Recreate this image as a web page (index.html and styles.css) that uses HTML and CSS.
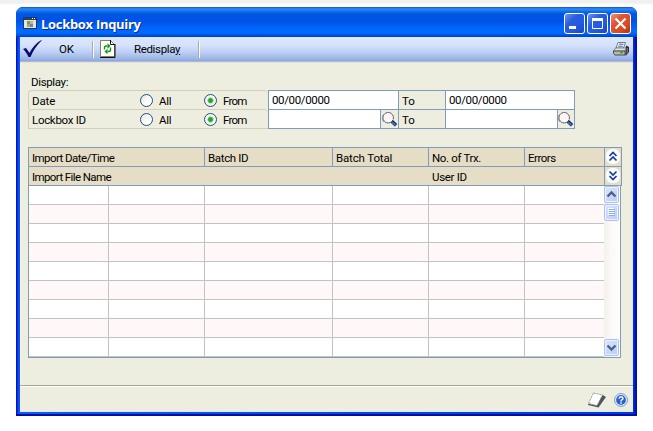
FILE: index.html
```html
<!DOCTYPE html>
<html lang="en">
<head>
<meta charset="utf-8">
<title>Lockbox Inquiry</title>
<link rel="stylesheet" href="styles.css">
</head>
<body>
<svg width="0" height="0" class="defs">
  <symbol id="lens" viewBox="0 0 17 18">
    <circle cx="7.2" cy="7.7" r="5.2" fill="#fff7fb" stroke="#1c1c28" stroke-dasharray="1.4 .7"/>
    <path d="M3 12a5.5 5.5 0 0 1 0-8" fill="none" stroke="#a58ca0"/>
    <path d="M11 11.5l4 3.700" stroke="#10205c" stroke-width="3.6"/>
    <path d="M11.3 12.300l3 2.700" stroke="#3c82e4" stroke-width="1.6"/>
  </symbol>
</svg>
<div class="window">
  <header class="titlebar">
    <svg class="app-icon" width="14" height="12" viewBox="0 0 14 12">
      <path fill="#1c376f" d="M0 0h14v12H0z"/><path fill="#e8e4dc" d="M1 3h12v8H1z"/>
      <path fill="#334458" d="M1 1h12v1.4H1z"/><path fill="#fff" d="M9 1h1v1H9zM11 1h1v1h-1z"/>
      <path fill="#4ba3a5" d="M4 4h3v3H4z"/><path fill="#e5b540" d="M7 4h3v3H7z"/>
      <path fill="#cda03e" d="M4 7h3v3H4z"/><path fill="#4a91d5" d="M7 7h3v3H7z"/>
    </svg>
    <h1>Lockbox Inquiry</h1>
    <div class="controls">
      <span class="control"><svg width="19" height="19"><path fill="#fff" d="M4 12h7v3H4z"/></svg></span>
      <span class="control"><svg width="19" height="19"><path fill="none" stroke="#fff" d="M4.5 5v9.500h10V5"/><path fill="#fff" d="M4 4h11v3H4z"/></svg></span>
      <span class="control close"><svg width="19" height="19"><path fill="none" stroke="#fff" stroke-width="2.2" d="M4.500 4.500l10 10M14.500 4.500l-10 10"/></svg></span>
    </div>
  </header>
  <nav class="toolbar">
    <svg class="check" width="19" height="18" viewBox="0 0 19 18"><path fill="#080877" d="M0 9l3-1 3.500 5C9 8 13 3 18.500 0l.2.600C13.500 5.500 10 11 7.500 17H5.500C4 14 2.500 11 0 9z"/></svg>
    <span class="ok">OK</span>
    <i class="divider"></i>
    <svg class="refresh" width="16" height="18" viewBox="0 0 16 18">
      <path fill="#fffff4" stroke="#7b8170" d="M.5.5h10l4 4v12H.5z"/><path fill="none" stroke="#111" d="M10.500 0v4.500H15M15 4v13.500H0"/>
      <path fill="none" stroke="#15922a" stroke-width="1.4" d="M4.500 9.500V7.500q0-1.500 2-1.500h1M10.500 7.500V10q0 1.500-2 1.500H7.500"/>
      <path fill="#15922a" d="M7.500 3.300l3 2.700-3 2.700zM7.500 8.800l-3 2.700 3 2.700z"/>
    </svg>
    <span class="redisplay">Redispla<u>y</u></span>
    <i class="divider last"></i>
    <svg class="printer" width="16" height="14" viewBox="0 0 16 14">
      <path fill="#f8fbff" stroke="#55606e" stroke-width=".8" d="M5 .5h7.500L10.500 6H3z"/>
      <path stroke="#4b60ae" d="M6 2.200h4.500M5.200 4.200h4.500"/>
      <path fill="#2c2f30" d="M13 3.500l3 1.500v5l-3.500 4V7z"/>
      <path fill="#e4e6e0" stroke="#6e726f" stroke-width=".8" d="M2.500 6h10.500l-1 3H.8z"/>
      <path fill="#b5b8b0" stroke="#3c4040" stroke-width=".9" d="M.5 9H12v4H2L.5 11.500z"/>
      <path fill="#20a833" d="M7 9.700h3v1.600H7z"/><path stroke="#99a" stroke-width=".8" d="M14.200 6v5"/>
    </svg>
  </nav>
  <main>
    <div class="caption">Display:</div>
    <section class="filters">
      <div class="filter">
        <div class="options"><span class="name date">Date</span><i class="radio"></i><span class="all">All</span><i class="radio on"></i><span class="from">From</span></div>
        <div class="field"><span class="zeros">00/00/0000</span></div>
        <div class="to">To</div>
        <div class="field end"><span class="zeros">00/00/0000</span></div>
      </div>
      <div class="filter">
        <div class="options"><span class="name">Lockbox ID</span><i class="radio"></i><span class="all">All</span><i class="radio on"></i><span class="from">From</span></div>
        <div class="field"><span class="lookup"><svg width="17" height="18"><use href="#lens"/></svg></span></div>
        <div class="to">To</div>
        <div class="field end"><span class="lookup"><svg width="17" height="18"><use href="#lens"/></svg></span></div>
      </div>
    </section>
    <section class="list">
      <div class="head">
        <div class="hrow">
          <span class="h1 t1">Import Date/Time</span><span class="h2 t2">Batch ID</span><span class="h3 t3">Batch Total</span><span class="h4 t4">No. of Trx.</span><span class="h5 t5">Errors</span>
          <span class="toggle"><svg width="14" height="15"><path d="M3.500 7L7 3.500 10.500 7M3.500 11.500L7 8l3.500 3.500"/></svg></span>
        </div>
        <div class="hrow">
          <span class="wide t6">Import File Name</span><span class="user t7">User ID</span>
          <span class="toggle"><svg width="14" height="15"><path d="M3.500 3.500L7 7l3.500-3.500M3.500 8L7 11.500 10.500 8"/></svg></span>
        </div>
      </div>
      <div class="body">
        <div class="rows">
          <div class="row"><i></i><i></i><i></i><i></i><i></i><i></i></div>
          <div class="row"><i></i><i></i><i></i><i></i><i></i><i></i></div>
          <div class="row"><i></i><i></i><i></i><i></i><i></i><i></i></div>
          <div class="row"><i></i><i></i><i></i><i></i><i></i><i></i></div>
          <div class="row"><i></i><i></i><i></i><i></i><i></i><i></i></div>
          <div class="row"><i></i><i></i><i></i><i></i><i></i><i></i></div>
          <div class="row"><i></i><i></i><i></i><i></i><i></i><i></i></div>
          <div class="row"><i></i><i></i><i></i><i></i><i></i><i></i></div>
          <div class="row"><i></i><i></i><i></i><i></i><i></i><i></i></div>
        </div>
        <div class="scroll">
          <span class="sbtn"><svg width="13" height="15"><path class="arrow" d="M2.500 9.500l4-4 4 4"/></svg></span>
          <span class="sbtn thumb"><svg width="13" height="15"><path stroke="#fff" d="M3 3.500h6M3 5.500h6M3 7.500h6M3 9.500h6"/><path stroke="#8cadec" d="M4 4.500h6M4 6.500h6M4 8.500h6M4 10.500h6"/></svg></span>
          <span class="sbtn down"><svg width="13" height="15"><path class="arrow" d="M2.500 5.500l4 4 4-4"/></svg></span>
        </div>
      </div>
    </section>
  </main>
  <footer>
    <svg width="20" height="16" viewBox="0 0 20 16">
      <path fill="#4d565c" d="M15 2.500l4 2.500-7.500 10.500L1 13l.5-1.500 8 2z"/><path fill="#fff" stroke="#888c8e" stroke-width=".9" stroke-dasharray="2 1" d="M6.500 1l9 2-5.500 10.500-8.500-2z"/>
    </svg>
    <svg class="help" width="14" height="14" viewBox="0 0 14 14">
      <circle cx="7" cy="7" r="6.400" fill="#f4f9fd" stroke="#5b86ce" stroke-width=".9"/><circle cx="7" cy="7" r="4.900" fill="#2a62cd"/>
      <path fill="none" stroke="#fff" stroke-width="1.400" d="M5 5.700q.2-1.900 2.200-1.900Q9 3.900 9 5.400q0 1-1.200 1.500Q7 7.300 7 8.500M7 9.300v1.400"/>
    </svg>
  </footer>
</div>
</body>
</html>
```
FILE: styles.css
```css
* { box-sizing: border-box; }
body {
  margin: 0;
  height: 431px;
  overflow: hidden;
  padding: 7px 16px 15px;
  background: linear-gradient(#f0f0f0 0, #f0f0f0 3px, #fbfbfb 4px, #fff 6px);
  font: 11.5px/18px Roboto, "Liberation Sans", sans-serif;
  color: #000;
}
.defs { position: absolute; }
svg { display: block; flex: none; }
i { display: block; flex: none; }
.window {
  width: 621px;
  height: 409px;
  display: flex;
  flex-direction: column;
  padding: 0 4px 4px;
  border-radius: 7px 7px 0 0;
  overflow: hidden;
  background: linear-gradient(90deg, #0010b0 0, #0022d8 1px, #0645ec 2px, #125af0 4px, #0039df 617px, #0018c0 619px, #00089a 621px);
  box-shadow: inset 0 -2px #0010a5;
}
.titlebar {
  height: 30px;
  flex: none;
  margin: 0 -4px;
  padding: 0 6px 0 7px;
  display: flex;
  align-items: center;
  background: linear-gradient(#0650d4 0, #2d8df9 2px, #1672ee 4px, #0057e3 7px, #0052e5 14px, #0066fc 21px, #006bff 26px, #0049d2 29px, #003ec0 30px);
}
.app-icon { margin-top: 2px; }
h1 {
  margin: 3px 0 0 4px;
  font: bold 13px/18px "Open Sans", "Noto Sans", sans-serif;
  letter-spacing: -0.3px;
  white-space: nowrap;
  color: #fff;
  text-shadow: 1px 1px #0b2a8c;
}
.controls { display: flex; gap: 2px; margin: 3px 0 0 auto; }
.control {
  width: 21px;
  height: 21px;
  border: 1px solid #fff;
  border-radius: 3px;
  background: linear-gradient(135deg, #6d93ee, #2a5ee0 35%, #2459e2 65%, #1d47ba);
}
.close { background: linear-gradient(135deg, #ed9580, #e0542f 35%, #dc4821 70%, #b62f10); }
.toolbar {
  height: 26px;
  flex: none;
  display: flex;
  align-items: flex-start;
  padding: 3px 4px 0 3px;
  background: linear-gradient(#dce8fc 0, #d6e2fb 8px, #bdd0f4 15px, #9bb5e7 22px, #87a5dc 24px, #d8cec8 25px, #f6f4ec 26px);
}
.toolbar span { white-space: nowrap; }
.ok { margin-left: 17px; width: 33px; letter-spacing: -.2px; }
.divider { width: 1px; height: 17px; margin-top: 1px; background: #b2a99d; box-shadow: 1px 0 #f5f8fc; }
.refresh { margin-left: 7px; }
.redisplay { margin-left: 18px; width: 64px; letter-spacing: -.35px; }
.printer { margin: 2px 0 0 auto; }
main {
  flex: 1;
  padding: 10px 11px 0 8px;
  background: #edeedf;
  border-left: 1px solid #f5f6ec;
  border-right: 1px solid #dfe9f8;
}
.caption { margin-left: 2px; height: 17px; letter-spacing: -.35px; }
.filters { width: 547px; margin-left: -1px; border-bottom: 1px solid #7f9db9; border-image: linear-gradient(90deg, #d0d0bd 240px, #7f9db9 240px) 1; }
.filter { display: flex; height: 19px; }
.options {
  width: 240px;
  display: flex;
  align-items: center;
  padding-left: 3px;
  border: 1px solid #d0d0bd;
  border-width: 1px 0 0 1px;
  border-radius: 4px 4px 0 0;
  padding-top: 2px;
}
.name { width: 108px; letter-spacing: -.3px; }
.date { letter-spacing: -.1px; }
.radio { width: 13px; height: 13px; margin-top: -1px; border: 1px solid #234f79; border-radius: 50%; background: linear-gradient(135deg, #e4e4df, #fff 60%); }
.on { background: radial-gradient(circle, #23a52a 0 1.7px, #78c978 2.6px, #f7f8f3 3.4px); }
.all { width: 51px; padding-left: 6px; letter-spacing: -.3px; }
.from { padding-left: 6px; letter-spacing: -.8px; }
.field {
  width: 130px;
  display: flex;
  background: #fff;
  border: 1px solid #7f9db9;
  border-width: 1px 0 0 1px;
  padding-left: 3px;
}
.end { border-right-width: 1px; }
.zeros { letter-spacing: -.35px; }
.lookup { margin-left: auto; width: 18px; background: #edeedf; border-left: 1px solid #7f9db9; }
.end .lookup { width: 17px; }
.end .lookup svg { margin-left: -1px; }
.to { width: 47px; padding: 1px 0 0 3px; border: 1px solid #7f9db9; border-width: 1px 0 0 1px; }
.list { width: 594px; margin: 18px 0 0 -1px; }
.head { border: 1px solid #7f9db9; border-width: 0 1px 1px 0; background: #e5ddc5; }
.hrow { display: flex; height: 19px; }
.hrow > span { border: 1px solid #7f9db9; border-width: 1px 0 0 1px; padding: 1px 0 0 3px; white-space: nowrap; }
.hrow .h1 { width: 176px; }
.hrow .h2 { width: 128px; }
.hrow .h3, .hrow .h4 { width: 96px; }
.hrow .h5 { width: 80px; }
.hrow .wide { width: 400px; }
.hrow .user { width: 176px; border-left: 0; padding-left: 4px; }
.hrow .toggle { flex: 1; padding: 1px 0 0 1px; }
.toggle svg { border-radius: 6px; background: #fcfbfb; fill: none; stroke: #123ba1; stroke-width: 1.7; }
.t1 { letter-spacing: -.56px; }
.t6 { letter-spacing: -.6px; }
.t2, .t4 { letter-spacing: -.35px; }
.t3 { letter-spacing: -.15px; }
.t5 { letter-spacing: -.5px; }
.t7 { letter-spacing: -.3px; }
.body {
  width: 593px;
  height: 172px;
  display: flex;
  border: 1px solid #7f9db9;
  border-width: 0 1px 1px 1px;
  background: #fff;
}
.rows { width: 575px; }
.row { height: 19px; display: grid; grid-template-columns: 80px 96px 128px 96px 96px 79px; border-bottom: 1px solid #c3c3c3; }
.row:nth-child(even) { background: #fff7f8; }
.row i { border-right: 1px solid #c3c3c3; }
.row i:last-child { border-right: 0; }
.scroll { width: 16px; display: flex; flex-direction: column; background: linear-gradient(90deg, #f3f1ec, #fbfaf6 50%, #fefefd); }
.sbtn { width: 15px; height: 17px; border: 1px solid #adc2ee; border-radius: 2px; background: linear-gradient(135deg, #dae5fe, #b9cdfa); box-shadow: inset 0 0 0 1px #ecf2ff; }
.thumb { margin-top: 1px; }
.down { margin: auto 0 1px; }
.arrow { fill: none; stroke: #4d6185; stroke-width: 2.3; }
footer {
  height: 27px;
  flex: none;
  display: flex;
  justify-content: flex-end;
  gap: 7px;
  padding: 6px 5px 0;
  border-top: 1px solid #a7a898;
  border-bottom: 1px solid #dcebf7;
  background: linear-gradient(#fff 1px, #edeedf 1px);
}
.help { margin-top: 1px; }
```
